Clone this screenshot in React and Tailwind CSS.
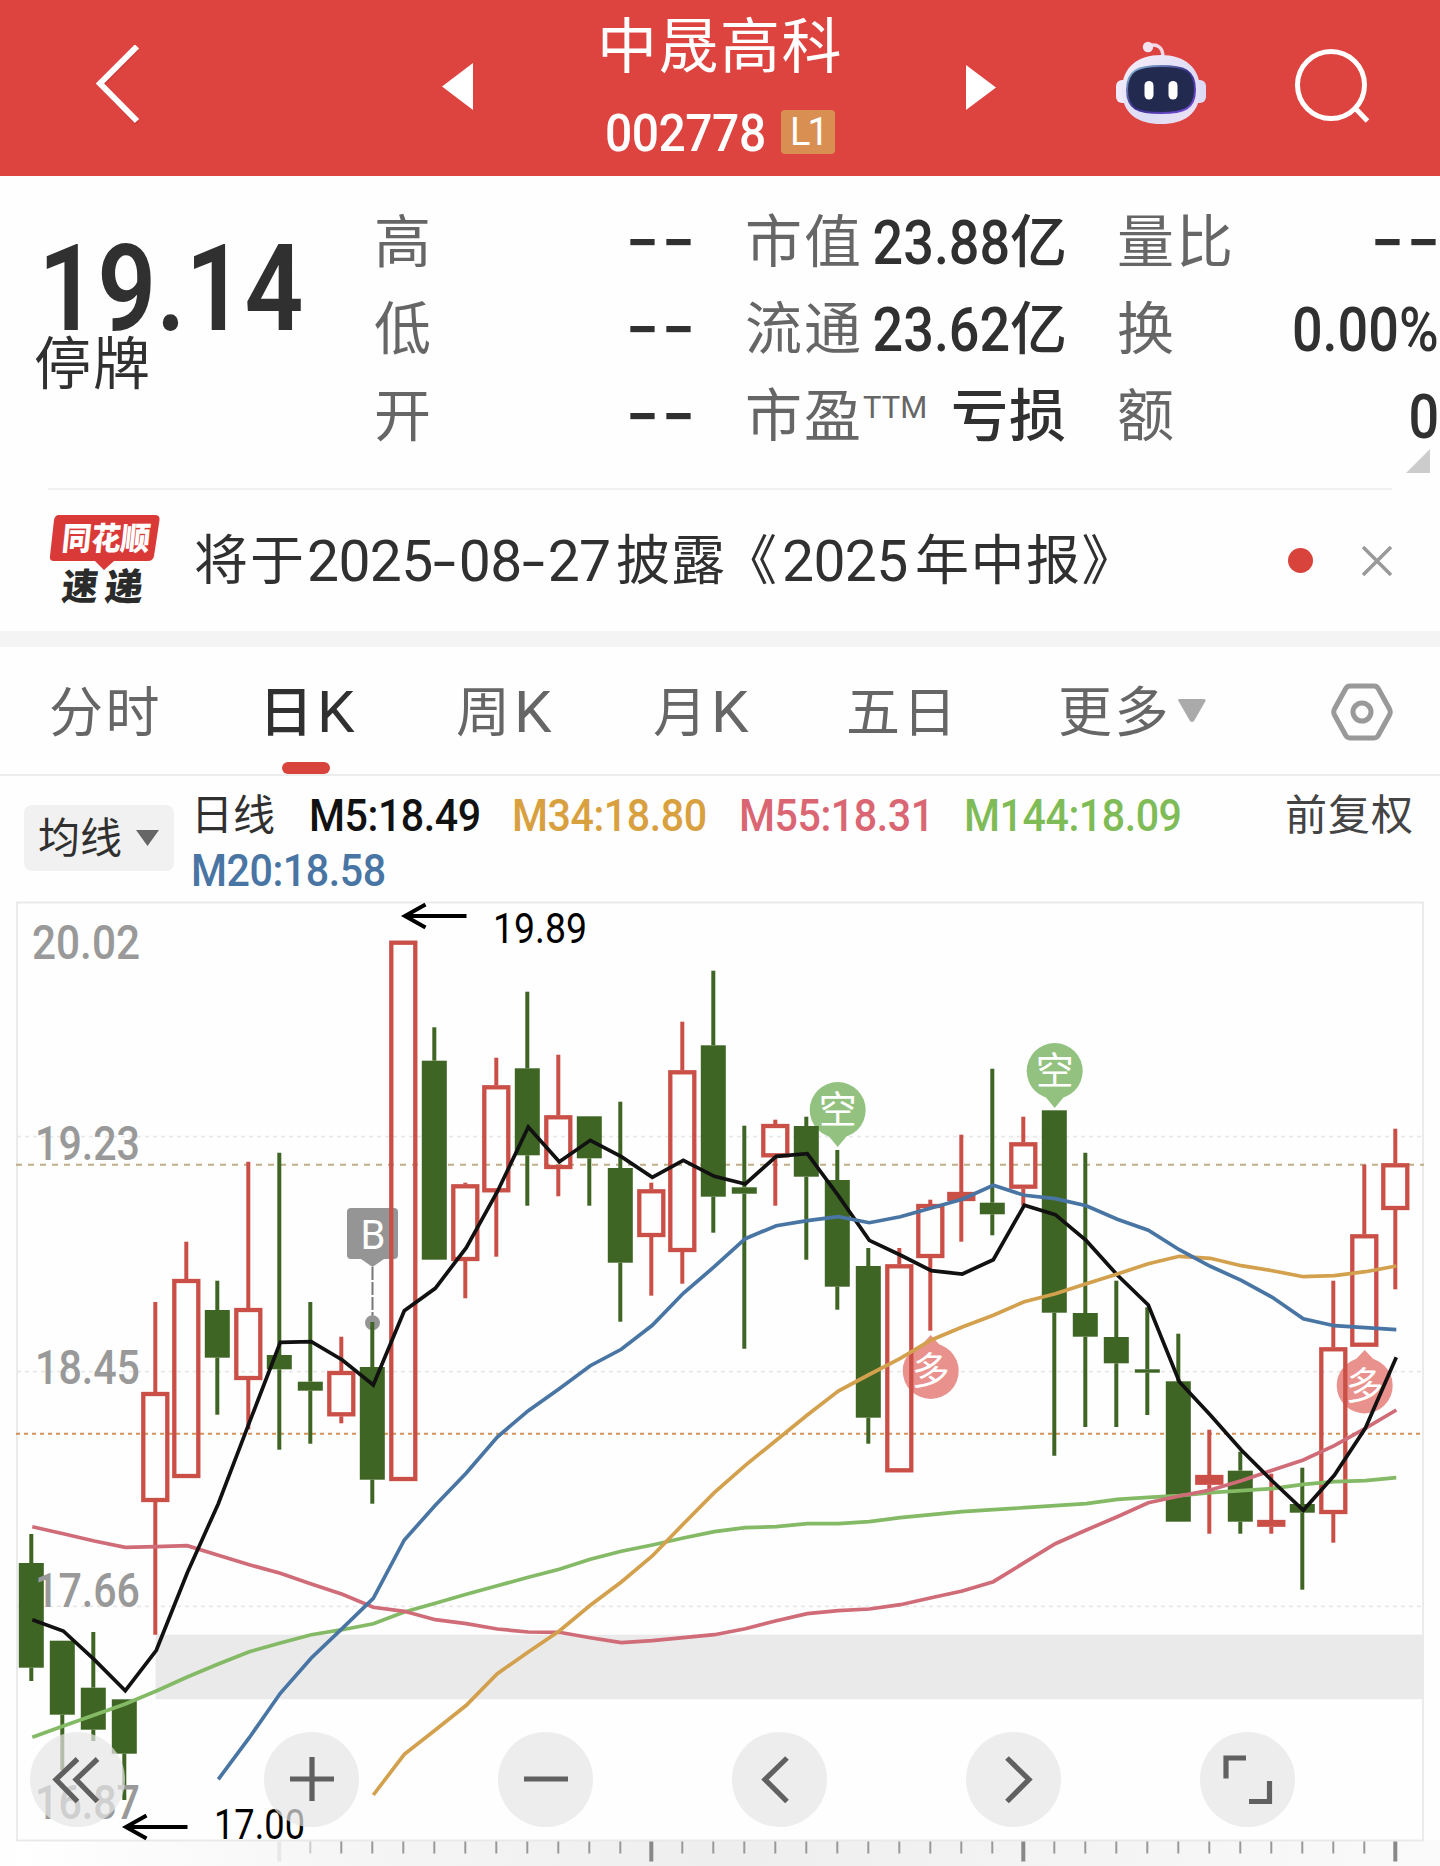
import React, { useState } from "react";

// type, high, body top, body bottom, low
const CANDLES = [
  ["g", 1534, 1563, 1667.7, 1681],
  ["g", 1640.7, 1640.7, 1714.7, 1770],
  ["g", 1632, 1687.7, 1729.7, 1741],
  ["g", 1699.3, 1699.3, 1753.7, 1800],
  ["r", 1302, 1392, 1502, 1634.7],
  ["r", 1241.7, 1279, 1478, 1478],
  ["g", 1280.7, 1310, 1357.7, 1414.7],
  ["r", 1161.7, 1308, 1380, 1429.3],
  ["g", 1152.7, 1355, 1369.3, 1449.7],
  ["g", 1302, 1381.7, 1390.7, 1443.7],
  ["r", 1336.7, 1371, 1416.3, 1423.3],
  ["g", 1322, 1367, 1479.7, 1503.7],
  ["r", 940.7, 940.7, 1481, 1481],
  ["g", 1027.3, 1060.7, 1259.7, 1259.7],
  ["r", 1182.7, 1184.3, 1261, 1298.3],
  ["r", 1057.7, 1085.3, 1192.3, 1256.7],
  ["g", 991.7, 1068.3, 1155.3, 1205.7],
  ["r", 1054.7, 1115.3, 1169, 1196.3],
  ["g", 1116.3, 1116.3, 1158.3, 1205.7],
  ["g", 1101.7, 1168, 1262.7, 1321.7],
  ["r", 1182.7, 1189.3, 1237, 1295.7],
  ["r", 1021.7, 1070.3, 1252, 1283.7],
  ["g", 970.7, 1045.3, 1196.7, 1232.7],
  ["g", 1125.7, 1187.3, 1193.7, 1348.7],
  ["r", 1119.7, 1124, 1157.3, 1205.7],
  ["g", 1116.7, 1126, 1176.7, 1259.7],
  ["g", 1150, 1180, 1286.7, 1309.7],
  ["g", 1248, 1266, 1417.7, 1443.7],
  ["r", 1248, 1264.3, 1472.3, 1472.3],
  ["r", 1199.7, 1204, 1258, 1330.7],
  ["r", 1134.7, 1192, 1201, 1241.7],
  ["g", 1068.7, 1202.7, 1214.3, 1235.3],
  ["r", 1116.7, 1142.3, 1188.7, 1205.7],
  ["g", 1110.3, 1110.3, 1312.7, 1455.7],
  ["g", 1152.7, 1313, 1336.7, 1427],
  ["g", 1280.7, 1337, 1363.3, 1427],
  ["g", 1307.3, 1369.3, 1372.7, 1415],
  ["g", 1333.7, 1381.3, 1521.7, 1521.7],
  ["r", 1429.7, 1475, 1484.7, 1533.7],
  ["g", 1451.7, 1470.7, 1521.7, 1533.7],
  ["r", 1473.7, 1520, 1526.7, 1533.7],
  ["g", 1467.7, 1504, 1512.7, 1589.7],
  ["r", 1280.7, 1347.3, 1514, 1542.7],
  ["r", 1164.7, 1234.3, 1346.7, 1346.7],
  ["r", 1128.7, 1163.3, 1210, 1289.3],
];

const LINES = [
  {
    name: "M144",
    color: "#84b965",
    start: 0,
    ys: [1737.3, 1726, 1715, 1704, 1691, 1677, 1664, 1651.7, 1643, 1634.7, 1629.7, 1623.7, 1612, 1603.3, 1594.3, 1585.7, 1577.3, 1569.3, 1559.3, 1551.3, 1545, 1538, 1531.7, 1527.7, 1526.7, 1523.7, 1523.7, 1521.7, 1517.7, 1514.7, 1511.7, 1509.7, 1507.7, 1505.7, 1503.7, 1499.3, 1497.3, 1495.7, 1492.7, 1490.7, 1488.7, 1484.3, 1481.7, 1480.7, 1477.7],
  },
  {
    name: "M55",
    color: "#d06b78",
    start: 0,
    ys: [1526.7, 1533.7, 1541, 1547.3, 1546.7, 1545.7, 1555.3, 1564.7, 1573.3, 1584, 1594.3, 1607.3, 1611.3, 1619.7, 1623.7, 1629, 1632, 1632.3, 1637.7, 1642.7, 1640.7, 1637.7, 1634.7, 1628.7, 1620.7, 1613.7, 1610.7, 1609, 1604.7, 1597.7, 1591, 1581.7, 1562.7, 1543.7, 1530, 1516.7, 1502.7, 1496, 1490, 1480.7, 1470.3, 1460, 1445.7, 1428.3, 1410],
  },
  {
    name: "M5",
    color: "#111111",
    start: 0,
    ys: [1619.7, 1631, 1659.7, 1690.7, 1650.3, 1572.7, 1503.7, 1422.7, 1342.3, 1341.7, 1360, 1385, 1310.7, 1288.3, 1247.7, 1191.7, 1127, 1161.7, 1140.3, 1156.7, 1177.3, 1160.3, 1176.3, 1184, 1156.3, 1153.7, 1195.7, 1240.3, 1255, 1270.7, 1274, 1259.7, 1205.3, 1214.7, 1240.7, 1275, 1305, 1381.7, 1415, 1450, 1481, 1510.3, 1475.3, 1428.3, 1357.3],
  },
  {
    name: "M34",
    color: "#d3a04d",
    start: 11,
    ys: [1795, 1754.3, 1730, 1705.3, 1673.7, 1652, 1631, 1605.3, 1582, 1556, 1524, 1492.7, 1465.3, 1440.3, 1415, 1391, 1374.5, 1358.3, 1340, 1327, 1315.3, 1301.7, 1293.7, 1283.7, 1274, 1263.7, 1256.3, 1258.3, 1265.7, 1270.7, 1276.7, 1275.7, 1271.7, 1266],
  },
  {
    name: "M20",
    color: "#4875a3",
    start: 6,
    ys: [1779.3, 1737.7, 1693.3, 1658, 1628.3, 1598.3, 1540, 1505.3, 1473, 1437, 1410.7, 1388.7, 1365.7, 1349.3, 1325.3, 1293.3, 1266.7, 1238.7, 1225.7, 1220.7, 1216.7, 1222.7, 1216.7, 1208, 1199.3, 1185.3, 1195.3, 1198.7, 1205.7, 1219.3, 1230.3, 1249.7, 1266.3, 1280.3, 1297.3, 1318.7, 1325.7, 1327.7, 1329.7],
  },
];

const AXIS = [
  { value: "20.02", x: 32, w: 108, y: 959 },
  { value: "19.23", x: 35, w: 105, y: 1159.5 },
  { value: "18.45", x: 35, w: 105, y: 1384 },
  { value: "17.66", x: 35, w: 105, y: 1606.7 },
  { value: "16.87", x: 35, w: 105, y: 1819 },
];

const PINS = [
  { type: "空", x: 837.7, cy: 1110, tip: 1147 },
  { type: "空", x: 1054.7, cy: 1071, tip: 1108 },
  { type: "多", x: 930.7, cy: 1371, tip: 1335 },
  { type: "多", x: 1364.7, cy: 1385.5, tip: 1350 },
];

const TABS = [
  { name: "分时", width: "w-[210px]" },
  { name: "日K", width: "w-[197px]" },
  { name: "周K", width: "w-[197px]" },
  { name: "月K", width: "w-[193px]" },
  { name: "五日", width: "w-[212px]" },
];

const xAt = (i) => 31.3 + 31 * i;

const Robot = () => (
  <svg className="h-[84px] w-[94px]" viewBox="0 0 94 84">
    <defs>
      <linearGradient id="shell" x1="0" y1="0" x2="1" y2="1">
        <stop offset="0" stopColor="#f8eef8" />
        <stop offset="0.6" stopColor="#dcdcf6" />
        <stop offset="1" stopColor="#efe2f2" />
      </linearGradient>
      <linearGradient id="rim" x1="0" y1="0" x2="1" y2="1">
        <stop offset="0" stopColor="#8fc4dc" />
        <stop offset="0.5" stopColor="#3a2f8c" />
        <stop offset="1" stopColor="#7a4fe0" />
      </linearGradient>
    </defs>
    <path d="M34 6 C44 3 49 8 49 17" fill="none" stroke="#f3d9e6" strokeWidth="3.5" />
    <circle cx="34" cy="7" r="5.2" fill="#f3e4ef" />
    <rect x="2" y="40" width="14" height="23" rx="6" fill="#eeeafb" />
    <rect x="78" y="40" width="14" height="23" rx="6" fill="#dcdaf6" />
    <path d="M47 15 C70 15 86 27 86 50 C86 74 70 84 47 84 C24 84 8 74 8 50 C8 27 24 15 47 15Z" fill="url(#shell)" />
    <path d="M47 26 C70 26 81 30 81 50 C81 69 70 73 47 73 C24 73 13 69 13 50 C13 30 24 26 47 26Z" fill="#222a50" stroke="url(#rim)" strokeWidth="2" />
    <rect x="30.5" y="41" width="9" height="18.500" rx="4.5" fill="#fff" />
    <rect x="54.500" y="41" width="9" height="18.500" rx="4.5" fill="#fff" />
  </svg>
);

const Header = () => (
  <header className="flex h-[176px] items-center bg-[#dd433f] text-white">
    <svg className="-mt-[6px] ml-[94px] h-20 w-[46px]" viewBox="0 0 46 80" fill="none">
      <path d="M43 3.5 L7 40 L43 78" stroke="#8f1f1c" strokeOpacity="0.3" strokeWidth="5" />
      <path d="M43 1.5 L6 38.5 L43 76" stroke="currentColor" strokeWidth="6" />
    </svg>
    <svg className="-mt-[2px] ml-[302px] h-12 w-8" viewBox="0 0 32 48">
      <path d="M31 0 V47 L0 23.500Z" fill="currentColor" />
    </svg>
    <div className="ml-[123px] flex w-[244px] flex-col">
      <h1 className="h-[88px] whitespace-nowrap pt-[4px] text-[60px] leading-[88px] tracking-[1.500px]">中晟高科</h1>
      <div className="flex h-[88px] items-start pl-[8px] pt-[22px]">
        <span className="w-[161px] origin-left scale-x-[0.94] whitespace-nowrap text-[51px] font-medium leading-[47px] tracking-[-0.500px]">
          002778
        </span>
        <span className="ml-[15px] flex h-[44px] w-[54px] items-center justify-center rounded bg-[#d98f52] text-[38px] leading-none tracking-[-3px]">
          L1
        </span>
      </div>
    </div>
    <svg className="ml-[125px] h-12 w-[30px]" viewBox="0 0 30 48">
      <path d="M0 1 V46 L30 23.5Z" fill="currentColor" />
    </svg>
    <div className="-mt-[12px] ml-[118px]">
      <Robot />
    </div>
    <svg className="ml-[86px] h-20 w-20" viewBox="0 0 80 80" fill="none" stroke="currentColor" strokeWidth="5">
      <circle cx="37" cy="37" r="33.5" />
      <path d="M61 60 L73.500 73" />
    </svg>
  </header>
);

const Stat = ({ label, sup, children }) => (
  <div className="flex h-[87px] items-center justify-between whitespace-nowrap">
    <span className="-ml-px flex text-[57px] tracking-[2px] text-[#666]">
      {label}
      {sup && <span className="mt-[11px] text-[31px] tracking-normal">{sup}</span>}
    </span>
    <span className="flex items-center text-[57px] font-medium text-[#303030]">{children}</span>
  </div>
);

const Dashes = () => (
  <span className="-mr-[5px] -mt-[9px] font-['Inter'] text-[76px] font-normal leading-none tracking-[1px]">--</span>
);

const Num = ({ children }) => (
  <span className="-ml-[20px] inline-block origin-right scale-x-[0.87] text-[62px] leading-none">{children}</span>
);

const Quote = () => (
  <section className="flex h-[312px]">
    <div className="w-[375px] shrink-0 pl-[34px] pt-[54px] text-[#303030]">
      <div className="origin-left scale-x-[0.86] pl-[5px] text-[120px] font-semibold leading-[119px]">19.14</div>
      <div className="-mt-[14px] text-[57px] leading-[60px] tracking-[2px]">停牌</div>
    </div>
    <div className="w-[317px] shrink-0 pt-[23px]">
      <Stat label="高"><Dashes /></Stat>
      <Stat label="低"><Dashes /></Stat>
      <Stat label="开"><Dashes /></Stat>
    </div>
    <div className="ml-[54px] w-[321px] shrink-0 pt-[23px]">
      <Stat label="市值"><Num>23.88</Num>亿</Stat>
      <Stat label="流通"><Num>23.62</Num>亿</Stat>
      <Stat label="市盈" sup="TTM"><span className="tracking-[1px]">亏损</span></Stat>
    </div>
    <div className="relative ml-[51px] w-[321px] shrink-0 pt-[23px]">
      <Stat label="量比"><span className="mr-[2px] flex"><Dashes /></span></Stat>
      <Stat label="换"><Num>0.00%</Num></Stat>
      <Stat label="额"><Num>0</Num></Stat>
      <svg className="absolute bottom-[15px] right-[9px] h-6 w-6" viewBox="0 0 24 24">
        <path d="M24 0 V24 H0Z" fill="#ccc" />
      </svg>
    </div>
  </section>
);

const Hyphen = () => (
  <span className="inline-block w-[26px] origin-left scale-x-[1.450] tracking-normal">-</span>
);

const News = ({ onClose }) => (
  <section className="mx-12 flex h-[143px] items-center border-t-2 border-[#f0f0f0]">
    <svg className="h-[96px] w-[113px] shrink-0 overflow-visible" viewBox="0 0 113 96">
      <path d="M11 2 H107 Q112 2 111.500 7 L106 43 Q105 48 100 48 H66 L56 57 L47 48 H6 Q1 48 2 43 L6 7 Q7 2 11 2Z" fill="#d93a37" />
      <g fontFamily="Noto Sans CJK SC" fontWeight="900">
        <text x="17" y="37" fontSize="32" textLength="88" lengthAdjust="spacingAndGlyphs" transform="skewX(-6)" fill="#fff">同花顺</text>
        <text x="22" y="87" fontSize="37" textLength="36" lengthAdjust="spacingAndGlyphs" transform="skewX(-6)" fill="#2b2b2b">速</text>
        <text x="65" y="87" fontSize="37" textLength="38" lengthAdjust="spacingAndGlyphs" transform="skewX(-6)" fill="#2b2b2b">递</text>
      </g>
    </svg>
    <p className="ml-[33px] flex w-[1094px] shrink-0 items-center whitespace-nowrap pt-[2px] text-[54px] text-[#303030]">
      <span className="w-[113px] tracking-[2px]">将于</span>
      <span className="w-[309px] text-[57px] tracking-[-0.600px]">2025<Hyphen />08<Hyphen />27</span>
      <span className="w-[107px] tracking-[1px]">披露</span>
      <span className="w-[59px]">《</span>
      <span className="w-[133px] text-[57px] tracking-[-0.600px]">2025</span>
      <span className="tracking-[1.500px]">年中报》</span>
    </p>
    <span className="h-[25px] w-[25px] shrink-0 rounded-full bg-[#d8433c]" />
    <button onClick={onClose} className="ml-[49px] shrink-0">
      <svg className="h-[30px] w-[30px]" viewBox="0 0 30 30" stroke="#999" strokeWidth="3.500">
        <path d="M1 1 L29 29 M29 1 L1 29" />
      </svg>
    </button>
  </section>
);

const Tabs = ({ active, onSelect }) => (
  <nav className="flex h-[129px] items-center border-b-2 border-[#ededed] pl-[49px] text-[54px] text-[#666]">
    {TABS.map((tab) => (
      <div key={tab.name} className={`${tab.width} h-full shrink-0`}>
        <button
          onClick={() => onSelect(tab.name)}
          className={`relative h-full whitespace-nowrap pt-[5px] tracking-[2.500px] ${active === tab.name ? "font-medium text-[#303030]" : ""}`}
        >
          {tab.name.replace("K", "")}
          {tab.name.includes("K") && (
            <span className="ml-[1px] inline-block origin-left scale-x-105 text-[57px] font-normal">K</span>
          )}
          {active === tab.name && (
            <span className="absolute bottom-0 left-[23px] h-[12px] w-[48px] rounded-full bg-[#d8433c]" />
          )}
        </button>
      </div>
    ))}
    <button className="flex items-center whitespace-nowrap tracking-[2.500px]">
      <span className="pt-[5px]">更多</span>
      <svg className="ml-[7px] h-6 w-7" viewBox="0 0 28 24">
        <path d="M0 1 Q0 0 2 0 H26 Q28 0 27.500 2 L16 22 Q14 24 12 22 L0.500 2Z" fill="#aaa" />
      </svg>
    </button>
    <svg className="ml-[125px] mt-[2px] h-[60px] w-[62px]" viewBox="0 0 62 60" fill="none" stroke="#999" strokeWidth="5">
      <path d="M19 4 H43 Q46 4 47.500 7 L58.500 27 Q60 30 58.500 33 L47.500 53 Q46 56 43 56 H19 Q16 56 14.500 53 L3.500 33 Q2 30 3.500 27 L14.500 7 Q16 4 19 4Z" />
      <circle cx="31" cy="30" r="9" />
    </svg>
  </nav>
);

const Average = ({ children }) => (
  <span className="inline-block origin-left scale-x-[0.915] pt-px text-[45px] font-medium tracking-[-0.500px]">{children}</span>
);

const Legend = () => (
  <section className="flex h-[114px] text-[42px] text-[#303030]">
    <button className="ml-6 mt-[29px] flex h-[66px] w-[150px] items-center whitespace-nowrap rounded-lg bg-[#f1f1f1] pl-[14px]">
      均线
      <svg className="ml-[14px] h-4 w-[23px]" viewBox="0 0 23 16">
        <path d="M0 0 H23 L11.500 16Z" fill="#666" />
      </svg>
    </button>
    <div className="ml-[17px] pt-[11px]">
      <div className="flex h-[56px] items-center whitespace-nowrap">
        <span className="w-[118px]">日线</span>
        <span className="w-[203px] text-[#111]"><Average>M5:18.49</Average></span>
        <span className="w-[227px] text-[#d9a040]"><Average>M34:18.80</Average></span>
        <span className="w-[225px] text-[#db6673]"><Average>M55:18.31</Average></span>
        <span className="w-[321px] text-[#7fbc58]"><Average>M144:18.09</Average></span>
        <span className="tracking-[1px] text-[#444]">前复权</span>
      </div>
      <div className="leading-[54px] text-[#4875a3]"><Average>M20:18.58</Average></div>
    </div>
  </section>
);

const Candle = ({ x, type, high, top, bottom, low }) => {
  const color = type === "r" ? "#c94f47" : "#3f6524";
  // bodies this thin have no room for a hollow middle
  const fill = bottom - top < 11 ? color : "none";
  return (
    <g>
      {high < top && <line x1={x} x2={x} y1={high} y2={top} stroke={color} strokeWidth="4" />}
      {low > bottom && <line x1={x} x2={x} y1={bottom} y2={low} stroke={color} strokeWidth="4" />}
      {type === "r" ? (
        <rect x={x - 12} y={top + 2} width="24" height={bottom - top - 4} fill={fill} stroke={color} strokeWidth="4.300" />
      ) : (
        <rect x={x - 12.5} y={top} width="25" height={bottom - top} fill={color} />
      )}
    </g>
  );
};

const Pin = ({ type, x, cy, tip }) => {
  const dir = tip > cy ? 1 : -1;
  const color = type === "空" ? "#93c180" : "#e9918d";
  return (
    <g>
      <circle cx={x} cy={cy} r="28" fill={color} />
      <path d={`M${x - 10} ${cy + dir * 25} L${x} ${tip} L${x + 10} ${cy + dir * 25}Z`} fill={color} />
      <text x={x} y={cy + 13} fontSize="38" textAnchor="middle" fill="#fff">{type}</text>
    </g>
  );
};

const Chart = () => (
  <svg className="block h-[976px] w-[1440px]" viewBox="0 890 1440 976">
    <defs>
      <linearGradient id="ruler" x1="0" x2="1" y1="0" y2="0">
        <stop offset="0" stopColor="#ffffff" />
        <stop offset="0.25" stopColor="#f5f5f5" />
        <stop offset="0.5" stopColor="#eeeeee" />
        <stop offset="1" stopColor="#fafafa" />
      </linearGradient>
    </defs>
    <rect x="16" y="1840" width="1424" height="26" fill="url(#ruler)" />
    <rect x="17" y="902.500" width="1406" height="938" fill="none" stroke="#e9e9e9" strokeWidth="1.800" />
    {[1136.7, 1371.7, 1606.3].map((y) => (
      <line key={y} x1="17" x2="1422" y1={y} y2={y} stroke="#e8e8e8" strokeWidth="1.800" strokeDasharray="4 4" />
    ))}
    <line x1="16" x2="1424" y1="1164.700" y2="1164.700" stroke="#bfae86" strokeWidth="2" strokeDasharray="6 6" />
    <line x1="16" x2="1422" y1="1433.700" y2="1433.700" stroke="#d0925a" strokeWidth="2" strokeDasharray="4 4" />
    <rect x="155.500" y="1634.700" width="1268.500" height="64.500" fill="#eaeaea" />

    {/* buy marker */}
    <rect x="347" y="1208" width="51" height="51" rx="4" fill="#959595" />
    <path d="M361 1259 L372.500 1267 L384 1259Z" fill="#959595" />
    <text x="373" y="1249" fontSize="40" textAnchor="middle" fill="#fff">B</text>
    <line x1="372.500" x2="372.500" y1="1267" y2="1322" stroke="#777" strokeWidth="2" strokeDasharray="13 2" />
    <circle cx="372.500" cy="1322.700" r="7.500" fill="#959595" />

    {PINS.map((p) => (
      <Pin key={p.x} {...p} />
    ))}
    {CANDLES.map(([type, high, top, bottom, low], i) => (
      <Candle key={i} x={xAt(i)} type={type} high={high} top={top} bottom={bottom} low={low} />
    ))}
    <g fontSize="48" fontWeight="500" fill="#999">
      {AXIS.map((a) => (
        <text key={a.value} x={a.x} y={a.y} textLength={a.w} lengthAdjust="spacingAndGlyphs">{a.value}</text>
      ))}
    </g>
    {LINES.map((l) => (
      <polyline
        key={l.name}
        points={l.ys.map((y, i) => `${xAt(i + l.start) + 1},${y}`).join(" ")}
        fill="none"
        stroke={l.color}
        strokeWidth="3.700"
      />
    ))}

    <g fill="none" stroke="#000" strokeWidth="4">
      <path d="M466.500 916 H405 M425.500 904.500 L405 916 L425.500 927.500" />
      <path d="M187.500 1827 H126 M146.500 1815.500 L126 1827 L146.500 1838.500" />
    </g>
    <g fontSize="42" fill="#000">
      <text x="493" y="942.500" textLength="94" lengthAdjust="spacingAndGlyphs">19.89</text>
      <text x="214" y="1839" textLength="91" lengthAdjust="spacingAndGlyphs">17.00</text>
    </g>

    {CANDLES.map((_, i) => {
      if (i < 8) return null;
      const major = (i - 8) % 12 === 0;
      return (
        <line
          key={i}
          x1={xAt(i)}
          x2={xAt(i)}
          y1="1841.500"
          y2={major ? 1861.5 : 1853.5}
          stroke={i === 8 ? "#e8e8e8" : major ? "#888" : i === 9 ? "#ccc" : "#999"}
          strokeWidth={major ? 4 : 2}
        />
      );
    })}
  </svg>
);

const CONTROLS = [
  { name: "first", d: "M47.500 27 L26 47.500 L47.500 69.500 M67.500 27 L46 47.500 L67.500 69.500" },
  { name: "zoom in", d: "M26 47 H70 M48 25 V69" },
  { name: "zoom out", d: "M26 47 H70" },
  { name: "back", d: "M55 26 L33 47.500 L55 69.500" },
  { name: "forward", d: "M41 26 L63 47.500 L41 69.500" },
  { name: "fullscreen", d: "M46 26 H26 V46.500 M69.500 49 V69.500 H49" },
];

const Controls = () => (
  <div className="absolute inset-x-0 bottom-[39px] flex justify-between pl-[30px] pr-[145px]">
    {CONTROLS.map((c) => (
      <button key={c.name} className="h-[95px] w-[95px] rounded-full bg-[#e5e5e5]/70">
        <svg className="h-[95px] w-[95px]" viewBox="0 0 95 95" fill="none" stroke="#606060" strokeWidth="5.200">
          <path d={c.d} />
        </svg>
      </button>
    ))}
  </div>
);

export default function App() {
  const [tab, setTab] = useState("日K");
  const [newsOpen, setNewsOpen] = useState(true);

  return (
    <div className="h-[1866px] w-[1440px] overflow-hidden bg-[#fefefe] font-['Roboto','Noto_Sans_CJK_SC',sans-serif]">
      <Header />
      <Quote />
      {newsOpen && <News onClose={() => setNewsOpen(false)} />}
      <div className="h-[16px] bg-[#f4f4f4]" />
      <Tabs active={tab} onSelect={setTab} />
      <Legend />
      <div className="relative">
        <Chart />
        <Controls />
      </div>
    </div>
  );
}
